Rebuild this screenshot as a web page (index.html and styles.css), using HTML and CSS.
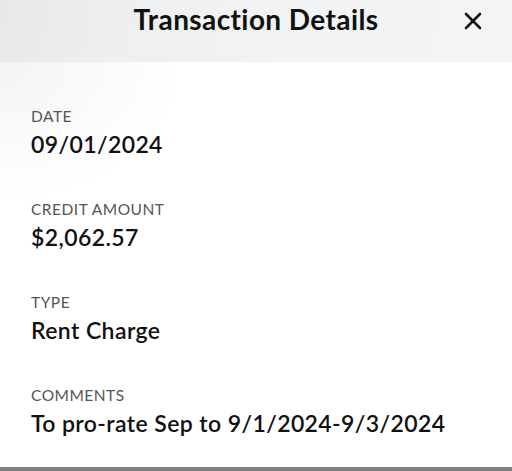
FILE: index.html
```html
<!DOCTYPE html>
<html lang="en">
<head>
	<meta charset="UTF-8">
	<title>Transaction Details</title>
	<link rel="stylesheet" href="styles.css">
</head>
<body>
	<div class="sheet">
		<div class="sheet-header">
			<h1 class="sheet-title">Transaction Details</h1>
			<button type="button" class="close-btn" aria-label="Close">
				<svg width="18" height="18" viewBox="0 0 18 18">
					<path d="M2 2 L16 16 M16 2 L2 16" stroke="#111" stroke-width="2.6" stroke-linecap="round" fill="none"/>
				</svg>
			</button>
		</div>

		<div class="sheet-body">
			<div class="field">
				<div class="field-label">DATE</div>
				<div class="field-value">09/01/2024</div>
			</div>
			<div class="field">
				<div class="field-label">CREDIT AMOUNT</div>
				<div class="field-value">$2,062.57</div>
			</div>
			<div class="field">
				<div class="field-label">TYPE</div>
				<div class="field-value">Rent Charge</div>
			</div>
			<div class="field">
				<div class="field-label">COMMENTS</div>
				<div class="field-value">To pro-rate Sep to 9/1/2024-9/3/2024</div>
			</div>
		</div>
	</div>
	<div class="bottom-bar"></div>
</body>
</html>
```

FILE: styles.css
```css
*{
	padding: 0px;
	margin: 0px;
	box-sizing: border-box;
}
body{
	width: 512px;
	height: 471px;
	overflow: hidden;
	font-family: "Lato", "Liberation Sans", sans-serif;
	color: #111;
	background-color: white;
	display: flex;
	flex-direction: column;
}

.sheet{
	flex: 1;
	display: flex;
	flex-direction: column;
	background: radial-gradient(ellipse 180px 140px at 0 62px, #f4f4f4, #ffffff);
}

.sheet-header{
	height: 62px;
	position: relative;
	display: flex;
	justify-content: center;
	padding-top: 2px;
	background: linear-gradient(100deg, #e7e8ea 0%, #eeeff1 25%, #f2f3f5 55%, #f3f4f6 100%);
}

.sheet-title{
	font-size: 28px;
	font-weight: 700;
	line-height: 34px;
	letter-spacing: 0.4px;
}

.close-btn{
	position: absolute;
	top: 12px;
	right: 30px;
	width: 18px;
	height: 18px;
	border: none;
	background: none;
	display: flex;
}

.sheet-body{
	padding: 44px 31px 0px;
	display: flex;
	flex-direction: column;
	gap: 40px;
}

.field-label{
	font-size: 15.5px;
	line-height: 20px;
	color: #555;
	letter-spacing: 0.5px;
}

.field-value{
	font-size: 23px;
	line-height: 30px;
	font-weight: 600;
	letter-spacing: 0.4px;
	margin-top: 3px;
}

.bottom-bar{
	height: 4px;
	background-color: #808080;
}
```
